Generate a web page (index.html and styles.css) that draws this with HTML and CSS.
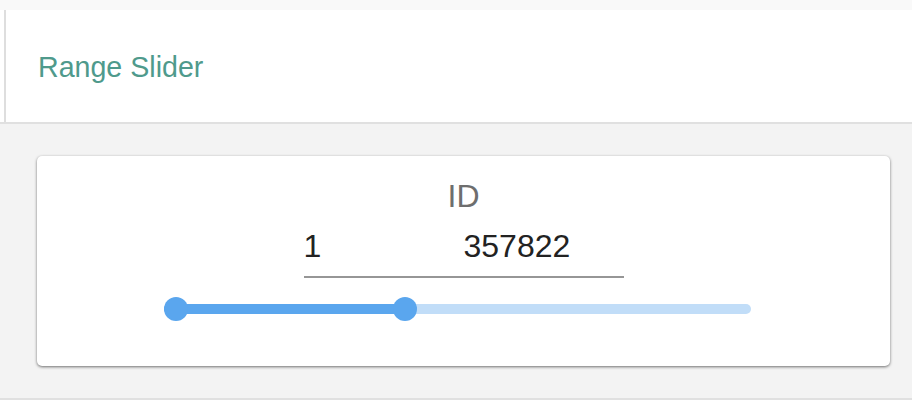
FILE: index.html
```html
<!DOCTYPE html>
<html>
<head>
<meta charset="utf-8">
<link rel="stylesheet" href="styles.css">
</head>
<body>
<div class="topstrip"></div>
<header class="header">
  <div class="header-inner">
    <h1 class="title">Range Slider</h1>
  </div>
</header>
<main class="main">
  <section class="card">
    <div class="label">ID</div>
    <div class="inputs">
      <input class="num" type="text" value="1">
      <input class="num" type="text" value="357822">
    </div>
    <div class="slider">
      <div class="track"></div>
      <div class="fill" style="width: 240px"></div>
      <div class="thumb" style="left: 0px"></div>
      <div class="thumb" style="left: 229px"></div>
    </div>
  </section>
</main>
<div class="footer"></div>
</body>
</html>
```
FILE: styles.css
```css
* { box-sizing: border-box; }
html, body { margin: 0; padding: 0; background: #fff; }
body { font-family: "Liberation Sans", Arial, Helvetica, sans-serif; }

.topstrip { height: 10px; background: #f9f9f9; }

.header {
  height: 114px;
  background: #fff;
  border-bottom: 2px solid #e0e0e0;
  padding-left: 4px;
}
.header-inner {
  height: 100%;
  border-left: 2px solid #dedede;
  padding-left: 32px;
  display: flex;
  align-items: center;
}
.title {
  margin: 0;
  font-size: 28.6px;
  font-weight: normal;
  color: #4f9a8c;
  line-height: 34px;
  padding-top: 2px;
}

.main {
  background: #f3f3f3;
  padding: 32px 22px 32px 37px;
  border-bottom: 2px solid #e0e0e0;
}

.card {
  background: #fff;
  border-radius: 5px;
  box-shadow: 0 1px 3px rgba(0,0,0,0.55);
  height: 210px;
  padding-top: 22px;
  display: flex;
  flex-direction: column;
}

.label {
  text-align: center;
  font-size: 32px;
  line-height: 37px;
  color: #6e6e6e;
}

.inputs {
  display: flex;
  justify-content: center;
  margin-top: 13px;
}
.num {
  width: 160px;
  height: 50px;
  border: none;
  border-bottom: 2px solid #969696;
  padding: 0 0 11px 0;
  margin: 0;
  font-family: "Liberation Sans", Arial, Helvetica, sans-serif;
  font-size: 32px;
  line-height: 37px;
  color: #222;
  background: transparent;
  outline: none;
}

.slider {
  position: relative;
  width: 587px;
  height: 24px;
  margin: 19px 0 0 127px;
}
.track {
  position: absolute;
  left: 0; right: 0; top: 7px;
  height: 10px;
  border-radius: 5px;
  background: #c1ddf8;
}
.fill {
  position: absolute;
  left: 0; top: 7px;
  height: 10px;
  border-radius: 5px;
  background: #5aa6ee;
}
.thumb {
  position: absolute;
  top: 0;
  width: 24px;
  height: 24px;
  border-radius: 50%;
  background: #5aa6ee;
}

.footer { height: 10px; background: #fff; }
```
